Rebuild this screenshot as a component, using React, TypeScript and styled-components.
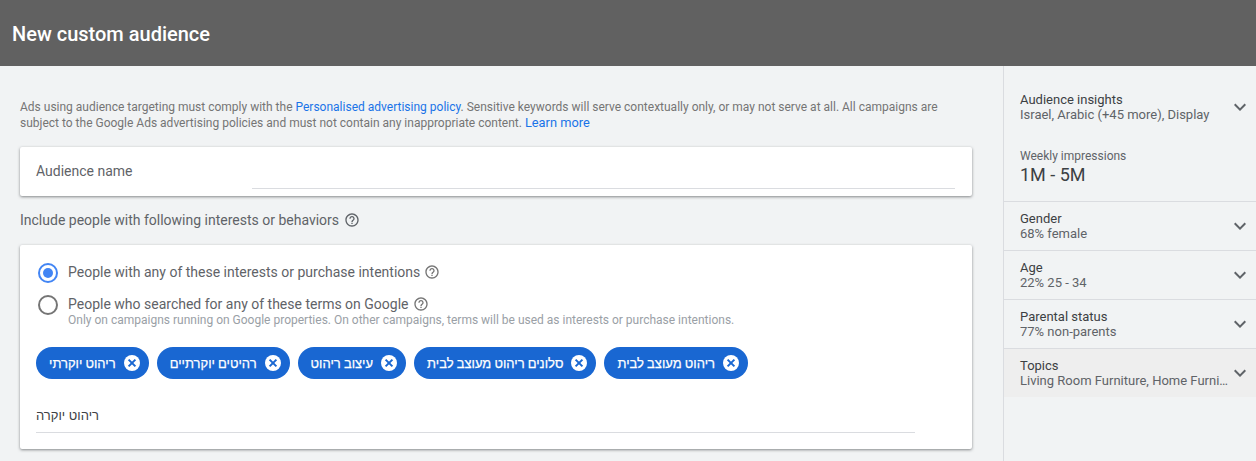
import styled, { createGlobalStyle } from "styled-components";

const GlobalStyle = createGlobalStyle`
  html, body {
    margin: 0;
    padding: 0;
    background: #f1f3f4;
    font-family: Roboto, "Liberation Sans", Arial, sans-serif;
    overflow: hidden;
  }
`;

const Page = styled.div`
  width: 1256px;
  height: 461px;
  overflow: hidden;
  display: flex;
  flex-direction: column;
`;

const Header = styled.header`
  height: 66px;
  flex: none;
  background: #616161;
  display: flex;
  align-items: center;
  padding: 2px 12px 0;
  box-sizing: border-box;
`;

const PageTitle = styled.h1`
  margin: 0;
  color: #fff;
  font-size: 20px;
  font-weight: 500;
`;

const Body = styled.div`
  flex: 1;
  display: flex;
  min-height: 0;
`;

const Main = styled.main`
  width: 1003px;
  flex: none;
  box-sizing: border-box;
  padding: 33px 31px 0 20px;
`;

const Notice = styled.p`
  margin: 0 0 16px;
  font-size: 12px;
  line-height: 16px;
  color: #757575;
`;

const Link = styled.a`
  color: #1a73e8;
  text-decoration: none;
`;

const LearnLink = styled(Link)`
  font-size: 12.8px;
`;

const Card = styled.section`
  background: #fff;
  border-radius: 2px;
  box-shadow: 0 1px 3px rgba(60, 64, 67, 0.6);
`;

const NameCard = styled(Card)`
  height: 49px;
  box-sizing: border-box;
  display: flex;
  padding: 0 17px 7px 16px;
`;

const NameLabel = styled.label`
  width: 216px;
  flex: none;
  font-size: 14px;
  line-height: 48px;
  color: #5f6368;
`;

const Underline = styled.div`
  flex: 1;
  border-bottom: 1px solid #dadce0;
`;

const SectionHeading = styled.h2`
  margin: 15px 0 17px;
  height: 17px;
  display: flex;
  align-items: center;
  gap: 5px;
  font-size: 14px;
  font-weight: 400;
  color: #5f6368;
`;

const IncludeCard = styled(Card)`
  height: 204px;
  box-sizing: border-box;
  padding: 16px 57px 0 16px;
`;

const RadioRow = styled.div<{ $sub?: boolean }>`
  display: flex;
  gap: 10px;
  height: ${(p) => (p.$sub ? "42px" : "24px")};
  margin: 0 0 8px 2px;
`;

const RadioMark = styled.span<{ $checked?: boolean }>`
  width: 20px;
  height: 20px;
  margin: 2px 0;
  flex: none;
  box-sizing: border-box;
  border-radius: 50%;
  border: 2px solid ${(p) => (p.$checked ? "#4285f4" : "#757575")};
  display: flex;
  align-items: center;
  justify-content: center;

  &::after {
    content: "";
    display: ${(p) => (p.$checked ? "block" : "none")};
    width: 10px;
    height: 10px;
    border-radius: 50%;
    background: #4285f4;
  }
`;

const RadioText = styled.div`
  display: flex;
  flex-direction: column;
  margin-top: -1px;
`;

const RadioLabel = styled.div`
  display: flex;
  align-items: center;
  gap: 4px;
  height: 24px;
  font-size: 14px;
  color: #5f6368;
`;

const RadioHint = styled.div`
  font-size: 12px;
  line-height: 12px;
  margin-top: -2px;
  color: #9aa0a6;
`;

const Chips = styled.div`
  display: flex;
  gap: 8px;
  margin-top: 12px;
`;

const Chip = styled.div`
  height: 32px;
  box-sizing: border-box;
  display: flex;
  align-items: center;
  gap: 6px;
  padding: 0 7px 0 13px;
  border-radius: 16px;
  background: #1967d2;
  color: #fff;
  font-size: 13px;
`;

const ChipText = styled.span`
  direction: rtl;
  font-family: "Liberation Sans", Arial, sans-serif;
  word-spacing: -0.5px;
  -webkit-text-stroke: 0.25px #fff;
`;

const TermInput = styled.div`
  margin-top: 26px;
  height: 28px;
  box-sizing: border-box;
  border-bottom: 1px solid #dadce0;
  font-size: 13px;
  line-height: 22px;
  color: #3c4043;
`;

const TermText = styled.span`
  direction: rtl;
  display: inline-block;
  font-family: "Liberation Sans", Arial, sans-serif;
`;

const Side = styled.aside`
  flex: 1;
  min-width: 0;
  border-left: 1px solid #dadce0;
`;

const SideRow = styled.div<{ $hover?: boolean }>`
  display: flex;
  align-items: center;
  height: ${(p) => (p.$hover ? "48px" : "49px")};
  box-sizing: border-box;
  padding: 0 4px 0 16px;
  border-bottom: ${(p) => (p.$hover ? "none" : "1px solid #dadce0")};
  background: ${(p) => (p.$hover ? "#eeeeee" : "transparent")};
`;

const InsightBlock = styled.div`
  height: 136px;
  box-sizing: border-box;
  padding: 26px 4px 0 16px;
  border-bottom: 1px solid #dadce0;
`;

const InsightTop = styled.div`
  display: flex;
  align-items: center;
  margin-bottom: 27px;
`;

const RowText = styled.div`
  flex: 1;
  min-width: 0;
`;

const RowTitle = styled.div`
  font-size: 13px;
  line-height: 15px;
  color: #3c4043;
`;

const RowValue = styled.div`
  font-size: 13px;
  line-height: 15px;
  color: #5f6368;
  white-space: nowrap;
  overflow: hidden;
  text-overflow: ellipsis;
`;

const SmallLabel = styled.div`
  font-size: 12px;
  line-height: 15px;
  color: #5f6368;
`;

const Impressions = styled.div`
  font-size: 18px;
  line-height: 22px;
  color: #3c4043;
`;

const Chevron = styled.svg`
  width: 24px;
  height: 24px;
  flex: none;
  fill: #5f6368;
`;

const HelpSvg = styled.svg<{ $size: number; $color: string }>`
  width: ${(p) => p.$size}px;
  height: ${(p) => p.$size}px;
  flex: none;
  fill: ${(p) => p.$color};
`;

const ChipClose = styled.svg`
  width: 20px;
  height: 20px;
  flex: none;
`;

function ExpandIcon() {
  return (
    <Chevron viewBox="0 0 24 24">
      <path d="M16.59 8.59 12 13.17 7.41 8.59 6 10l6 6 6-6z" />
    </Chevron>
  );
}

function HelpIcon({ size = 16, color = "#757575" }: { size?: number; color?: string }) {
  return (
    <HelpSvg $size={size} $color={color} viewBox="0 0 24 24">
      <path d="M11 18h2v-2h-2v2zm1-16C6.48 2 2 6.48 2 12s4.48 10 10 10 10-4.48 10-10S17.52 2 12 2zm0 18c-4.41 0-8-3.59-8-8s3.59-8 8-8 8 3.59 8 8-3.59 8-8 8zm0-14c-2.21 0-4 1.79-4 4h2c0-1.1.9-2 2-2s2 .9 2 2c0 2-3 1.75-3 5h2c0-2.25 3-2.5 3-5 0-2.21-1.79-4-4-4z" />
    </HelpSvg>
  );
}

function CloseIcon() {
  return (
    <ChipClose viewBox="0 0 20 20">
      <circle cx="10" cy="10" r="8" fill="#fff" />
      <path d="M6.6 6.6l6.8 6.8M13.4 6.6l-6.8 6.8" stroke="#1967d2" strokeWidth="2" fill="none" />
    </ChipClose>
  );
}

const chips = [
  "ריהוט יוקרתי",
  "רהיטים יוקרתיים",
  "עיצוב ריהוט",
  "סלונים ריהוט מעוצב לבית",
  "ריהוט מעוצב לבית",
];

const rows = [
  { title: "Gender", value: "68% female" },
  { title: "Age", value: "22% 25 - 34" },
  { title: "Parental status", value: "77% non-parents" },
];

export default function App() {
  return (
    <Page>
      <GlobalStyle />
      <Header>
        <PageTitle>New custom audience</PageTitle>
      </Header>
      <Body>
        <Main>
          <Notice>
            Ads using audience targeting must comply with the{" "}
            <Link href="#">Personalised advertising policy</Link>. Sensitive keywords will serve
            contextually only, or may not serve at all. All campaigns are
            <br />
            subject to the Google Ads advertising policies and must not contain any inappropriate
            content. <LearnLink href="#">Learn more</LearnLink>
          </Notice>
          <NameCard>
            <NameLabel>Audience name</NameLabel>
            <Underline />
          </NameCard>
          <SectionHeading>
            Include people with following interests or behaviors
            <HelpIcon color="#5f6368" />
          </SectionHeading>
          <IncludeCard>
            <RadioRow>
              <RadioMark $checked />
              <RadioText>
                <RadioLabel>
                  People with any of these interests or purchase intentions
                  <HelpIcon />
                </RadioLabel>
              </RadioText>
            </RadioRow>
            <RadioRow $sub>
              <RadioMark />
              <RadioText>
                <RadioLabel>
                  People who searched for any of these terms on Google
                  <HelpIcon />
                </RadioLabel>
                <RadioHint>
                  Only on campaigns running on Google properties. On other campaigns, terms will be
                  used as interests or purchase intentions.
                </RadioHint>
              </RadioText>
            </RadioRow>
            <Chips>
              {chips.map((label) => (
                <Chip key={label}>
                  <ChipText>{label}</ChipText>
                  <CloseIcon />
                </Chip>
              ))}
            </Chips>
            <TermInput>
              <TermText>ריהוט יוקרה</TermText>
            </TermInput>
          </IncludeCard>
        </Main>
        <Side>
          <InsightBlock>
            <InsightTop>
              <RowText>
                <RowTitle>Audience insights</RowTitle>
                <RowValue>Israel, Arabic (+45 more), Display</RowValue>
              </RowText>
              <ExpandIcon />
            </InsightTop>
            <SmallLabel>Weekly impressions</SmallLabel>
            <Impressions>1M - 5M</Impressions>
          </InsightBlock>
          {rows.map((row) => (
            <SideRow key={row.title}>
              <RowText>
                <RowTitle>{row.title}</RowTitle>
                <RowValue>{row.value}</RowValue>
              </RowText>
              <ExpandIcon />
            </SideRow>
          ))}
          <SideRow $hover>
            <RowText>
              <RowTitle>Topics</RowTitle>
              <RowValue>Living Room Furniture, Home Furniture</RowValue>
            </RowText>
            <ExpandIcon />
          </SideRow>
        </Side>
      </Body>
    </Page>
  );
}
